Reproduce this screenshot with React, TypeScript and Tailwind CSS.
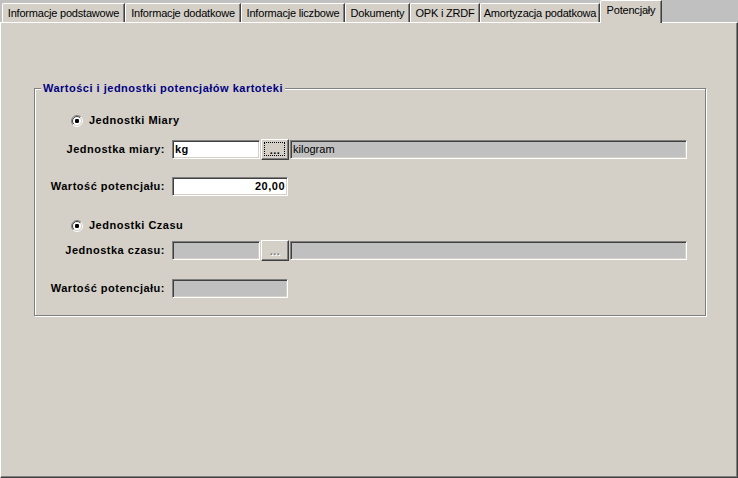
import React from "react";

const tabs: { label: string; w: string }[] = [
  { label: "Informacje podstawowe", w: "w-[123px]" },
  { label: "Informacje dodatkowe", w: "w-[116px]" },
  { label: "Informacje liczbowe", w: "w-[104px]" },
  { label: "Dokumenty", w: "w-[65px]" },
  { label: "OPK i ZRDF", w: "w-[70px]" },
  { label: "Amortyzacja podatkowa", w: "w-[120px]" },
];

function Radio({ id }: { id: string }) {
  return (
    <svg width="12" height="12" viewBox="0 0 12 12" className="shrink-0">
      <defs>
        <linearGradient id={`${id}-o`} x1="0" y1="0" x2="1" y2="1">
          <stop offset="0.5" stopColor="#808080" />
          <stop offset="0.5" stopColor="#ffffff" />
        </linearGradient>
        <linearGradient id={`${id}-i`} x1="0" y1="0" x2="1" y2="1">
          <stop offset="0.5" stopColor="#404040" />
          <stop offset="0.5" stopColor="#d4d0c8" />
        </linearGradient>
      </defs>
      <circle cx="6" cy="6" r="5.5" fill="none" stroke={`url(#${id}-o)`} strokeWidth="1" />
      <circle cx="6" cy="6" r="4.5" fill="#fff" stroke={`url(#${id}-i)`} strokeWidth="1" />
      <rect x="4" y="4" width="4" height="4" rx="1.2" fill="#000" />
    </svg>
  );
}

const sunken =
  "border border-t-[#808080] border-l-[#808080] border-b-white border-r-white shadow-[inset_1px_1px_0_#404040,inset_-1px_-1px_0_#d4d0c8]";

function DotsButton({ disabled }: { disabled?: boolean }) {
  return (
    <div className="relative w-[28px] h-[21px] bg-[#d4d0c8] border border-t-white border-l-white border-b-[#404040] border-r-[#404040] shadow-[inset_-1px_-1px_0_#808080] flex items-end justify-center">
      {!disabled && (
        <div className="absolute left-[2px] top-[2px] right-[3px] bottom-[3px] border border-dotted border-black" />
      )}
      <span
        className={
          disabled
            ? "leading-[10px] mb-[4px] text-[#808080] [text-shadow:1px_1px_0_#fff]"
            : "leading-[10px] mb-[4px] text-black"
        }
      >
        ...
      </span>
    </div>
  );
}

export default function App() {
  return (
    <div className="w-[738px] h-[478px] flex flex-col bg-[#c0c0c0] text-[11px] text-black overflow-hidden font-['Liberation_Sans',Arial,sans-serif]">
      {/* tab strip */}
      <div className="h-[22px] flex items-end pl-[2px] relative z-10 shrink-0">
        {tabs.map((t) => (
          <div
            key={t.label}
            className={`${t.w} h-[19px] bg-[#d4d0c8] border-t border-l border-r border-t-white border-l-white border-r-[#404040] shadow-[inset_-1px_0_0_#808080] rounded-tl-[2px] flex items-center justify-center whitespace-nowrap leading-none tracking-[-0.2px]`}
          >
            {t.label}
          </div>
        ))}
        <div className="w-[62px] h-[23px] -mb-[1px] bg-[#d4d0c8] border-t border-l border-r border-t-white border-l-white border-r-[#404040] shadow-[inset_-1px_0_0_#808080] rounded-tl-[2px] flex items-start justify-center pt-[4px] whitespace-nowrap leading-none tracking-[-0.2px]">
          Potencjały
        </div>
      </div>

      {/* panel */}
      <div className="flex-1 bg-[#d4d0c8] border-t border-l border-r border-b border-t-white border-l-white border-r-[#404040] border-b-[#404040] shadow-[inset_-1px_-1px_0_#808080]">
        <div className="relative ml-[33px] mt-[65px] w-[672px] h-[228px] border border-[#808080] shadow-[1px_1px_0_#fff,inset_1px_1px_0_#fff]">
          <div className="absolute left-[6px] top-[-7px] px-[2px] bg-[#d4d0c8] text-[#000080] font-bold tracking-[0.5px] leading-[13px] whitespace-nowrap">
            Wartości i jednostki potencjałów kartoteki
          </div>

          <div className="flex flex-col pt-[25px] font-bold tracking-[0.5px]">
            {/* Radio 1 */}
            <div className="h-[13px] flex items-center gap-[6px] pl-[36px]">
              <Radio id="r1" />
              <span className="leading-none">Jednostki Miary</span>
            </div>

            {/* Row 1 */}
            <div className="mt-[12px] h-[21px] flex items-center">
              <div className="w-[130px] text-right mr-[7px] leading-none">Jednostka miary:</div>
              <div className={`w-[88px] h-[19px] bg-white ${sunken} flex items-center pl-[2px] leading-none`}>kg</div>
              <div className="ml-[1px]">
                <DotsButton />
              </div>
              <div className={`ml-[1px] w-[397px] h-[19px] bg-[#c0c0c0] ${sunken} flex items-center pl-[2px] font-normal tracking-normal leading-none`}>
                kilogram
              </div>
            </div>

            {/* Row 2 */}
            <div className="mt-[17px] h-[19px] flex items-center">
              <div className="w-[130px] text-right mr-[7px] leading-none">Wartość potencjału:</div>
              <div className={`w-[116px] h-[19px] bg-white ${sunken} flex items-center justify-end pr-[2px] leading-none`}>20,00</div>
            </div>

            {/* Radio 2 */}
            <div className="mt-[23px] h-[13px] flex items-center gap-[6px] pl-[36px]">
              <Radio id="r2" />
              <span className="leading-none">Jednostki Czasu</span>
            </div>

            {/* Row 3 */}
            <div className="mt-[8px] h-[21px] flex items-center">
              <div className="w-[130px] text-right mr-[7px] leading-none">Jednostka czasu:</div>
              <div className={`w-[88px] h-[19px] bg-[#c0c0c0] ${sunken}`} />
              <div className="ml-[1px]">
                <DotsButton disabled />
              </div>
              <div className={`ml-[1px] w-[397px] h-[19px] bg-[#c0c0c0] ${sunken}`} />
            </div>

            {/* Row 4 */}
            <div className="mt-[18px] h-[19px] flex items-center">
              <div className="w-[130px] text-right mr-[7px] leading-none">Wartość potencjału:</div>
              <div className={`w-[116px] h-[19px] bg-[#c0c0c0] ${sunken}`} />
            </div>
          </div>
        </div>
      </div>
    </div>
  );
}
